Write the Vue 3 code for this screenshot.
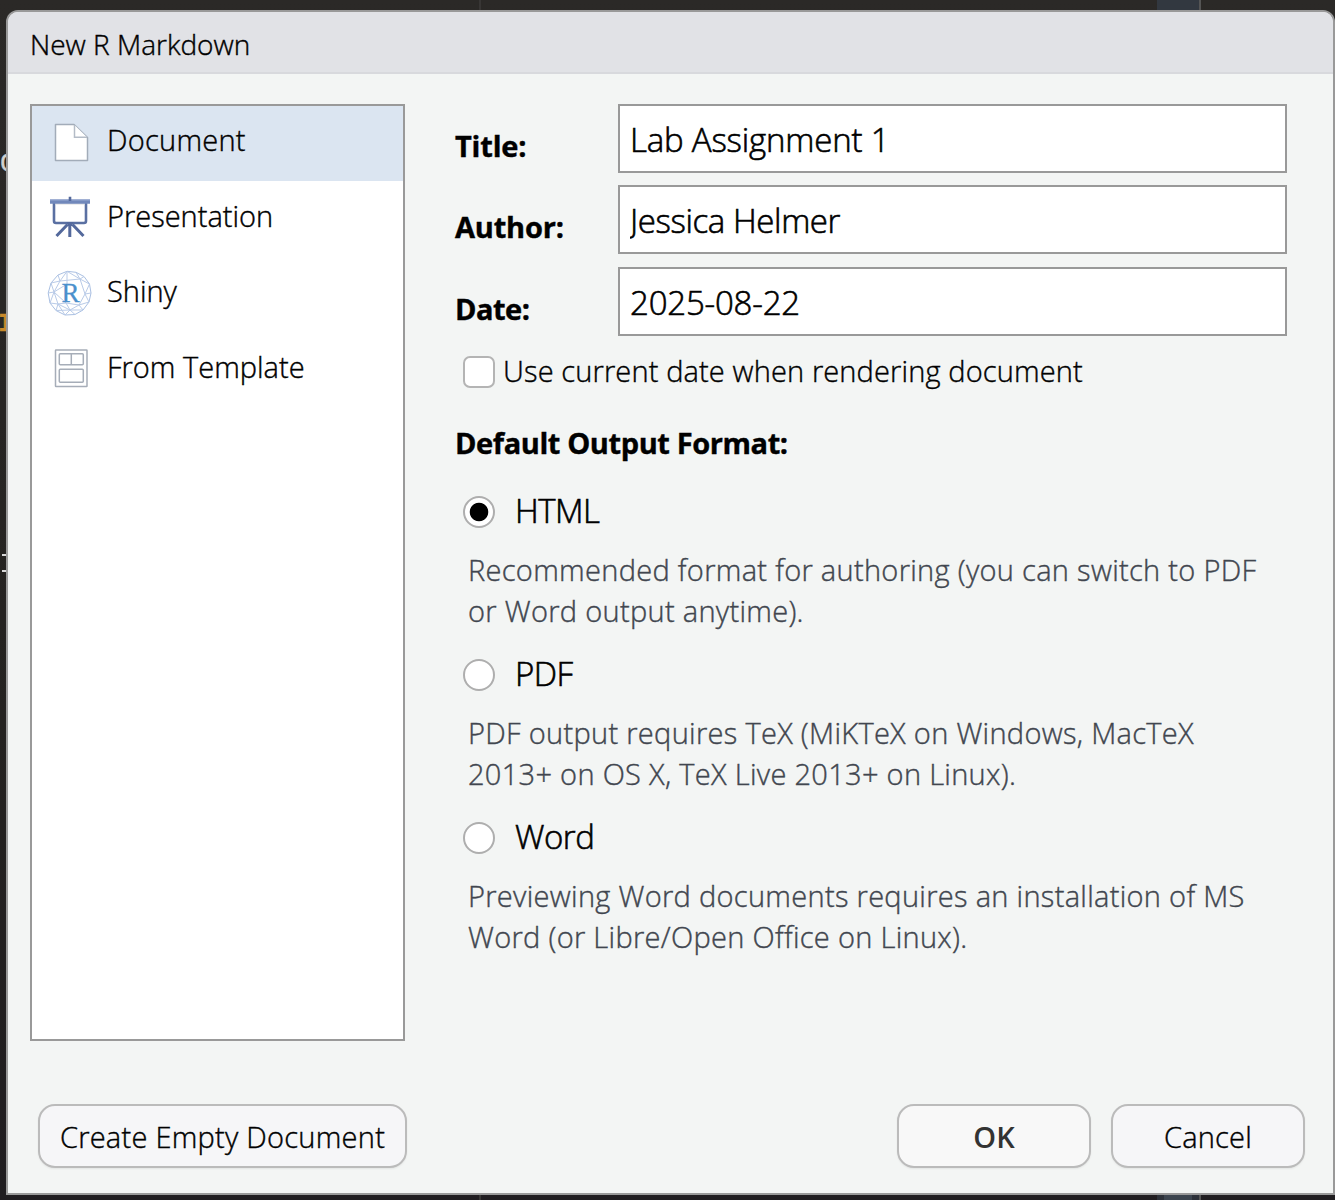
<script setup>
import { ref } from 'vue'

const templates = ['Document', 'Presentation', 'Shiny', 'From Template']
const active = ref('Document')
const fields = ref([
  { label: 'Title:', key: 'title', value: 'Lab Assignment 1' },
  { label: 'Author:', key: 'author', value: 'Jessica Helmer' },
  { label: 'Date:', key: 'date', value: '2025-08-22' },
])
const format = ref('HTML')
const formats = [
  { name: 'HTML', lines: ['Recommended format for authoring (you can switch to PDF', 'or Word output anytime).'] },
  { name: 'PDF', lines: ['PDF output requires TeX (MiKTeX on Windows, MacTeX', '2013+ on OS X, TeX Live 2013+ on Linux).'] },
  { name: 'Word', lines: ['Previewing Word documents requires an installation of MS', 'Word (or Libre/Open Office on Linux).'] },
]
</script>

<template>
  <div class="desktop">
    <i class="pane-line"></i>
    <i class="scroll top"></i>
    <i class="scroll bottom"></i>
    <div class="gutter">
      <span class="glyph c">C</span>
      <span class="glyph i">I</span>
      <i class="dash d1"></i>
      <i class="dash d2"></i>
    </div>
    <section class="dialog">
      <header class="caption"><span>New R Markdown</span></header>
      <div class="body">
        <ul class="list">
          <li v-for="t in templates" :key="t" :class="{ active: t === active }" @click="active = t">
            <svg v-if="t === 'Document'" class="icon" width="46" height="46" viewBox="0 0 46 46">
              <path d="M8.5 5.5H27L40.500 18.500V41.500H8.500Z" fill="#fff" stroke="#a2acb9" stroke-width="1.500" stroke-linejoin="round" />
              <path d="M27.500 6V18.200H40" fill="#fff" stroke="#b4bcc7" stroke-width="1.500" />
            </svg>
            <svg v-else-if="t === 'Presentation'" class="icon board" width="46" height="46" viewBox="0 0 46 46">
              <path d="M22.800 29V42M20.500 29.500L9.500 41M25.500 29.500L36.500 41" fill="none" stroke="#54699c" stroke-width="3" />
              <path d="M7 7V26Q7 28 9 28H37Q39 28 39 26V7" fill="#fff" stroke="#5a70a2" stroke-width="2.600" />
              <path d="M8 8.200H38V9.500H8Z" fill="#d9d9dc" />
              <path d="M3 4.500H43V8.800H3Z" fill="#7188bb" />
              <path d="M3 4.500H43V5.800H3Z" fill="#8da0cb" />
              <path d="M21.700 1.800H24.300V6H21.700Z" fill="#54699c" />
              <path d="M19.500 27H26.500L25 31H21Z" fill="#54699c" />
            </svg>
            <svg v-else-if="t === 'Shiny'" class="icon" width="46" height="46" viewBox="0 0 46 46">
              <g fill="none" stroke="#b9cbe8" stroke-width="1">
                <path d="M20 1.300L29 2.300L37 6.500L42.500 14L44 23L42 32L36 40L28 44.500L18 45L9 40.500L3 33L1.200 23L4 13L11 5Z" stroke="#a9bfe2" />
                <path d="M20 1.300L33 9L42.500 14L38 24L44 23M29 2.300L33 9L37 6.500M33 9L38 24L42 32L32 35L36 40L23 40L28 44.500M32 35L38 24M32 35L23 40L18 45L11 34L3 33L7 22L1.200 23M11 34L9 40.500L23 40L11 34L7 22L4 13L13 11L20 1.300M13 11L11 5M13 11L7 22L19 33M13 11L33 9M20 14L7 22M19 33L11 34M20 14L20 1.300M19 33L23 40M19 33L32 35" />
              </g>
              <text x="23.500" y="32" text-anchor="middle" class="shiny-r">R</text>
            </svg>
            <svg v-else class="icon" width="46" height="46" viewBox="0 0 46 46">
              <g fill="#fff" stroke="#a6adb8" stroke-width="1.500">
                <rect x="8.500" y="5" width="31.500" height="36.500" rx="0.500" />
                <rect x="12.300" y="8.800" width="24" height="11" rx="1" />
                <path d="M24.300 9V19.800" />
                <rect x="12.300" y="24.200" width="24" height="13" rx="1" />
              </g>
            </svg>
            <span>{{ t }}</span>
          </li>
        </ul>
        <form class="form" @submit.prevent>
          <label v-for="f in fields" :key="f.key" class="field" :class="f.key">
            <b>{{ f.label }}</b>
            <input v-model="f.value" type="text" spellcheck="false">
          </label>
          <label class="check"><i class="box"></i><span>Use current date when rendering document</span></label>
          <h2>Default Output Format:</h2>
          <div v-for="f in formats" :key="f.name" class="format">
            <label class="option" @click="format = f.name">
              <i class="radio" :class="{ on: format === f.name }"></i><span>{{ f.name }}</span>
            </label>
            <p><span v-for="l in f.lines" :key="l">{{ l }}</span></p>
          </div>
        </form>
      </div>
      <footer class="actions">
        <button class="empty" type="button"><span>Create Empty Document</span></button>
        <button class="ok" type="button"><span>OK</span></button>
        <button class="cancel" type="button"><span>Cancel</span></button>
      </footer>
    </section>
  </div>
</template>

<style>
body { margin: 0; }
</style>

<style scoped>
* { box-sizing: border-box; }
.desktop {
  position: relative;
  width: 1335px;
  height: 1200px;
  padding: 10px 0 5px 6px;
  overflow: hidden;
  background: linear-gradient(#2b2927, #242220 60%, #201d20);
  font-family: "Open Sans", "Noto Sans", sans-serif;
  font-size: 29px;
  font-weight: 300;
  color: #000;
  -webkit-text-stroke: 0.4px currentColor;
}
.pane-line { position: absolute; left: 479px; top: 0; width: 2px; height: 1200px; background: #383635; }
.scroll { position: absolute; left: 1157px; width: 44px; height: 10px; background: #323840; border-right: 2px solid #555; }
.scroll.top { top: 0; }
.scroll.bottom { bottom: 0; border-left: 7px solid #2c3038; box-shadow: inset -7px 0 #2c3038; background: #3c444e; }
.gutter { position: absolute; left: 0; top: 0; width: 6px; height: 1200px; overflow: hidden; font: 26px/30px "Liberation Mono", monospace; }
.glyph { position: absolute; left: 0; }
.glyph.c { top: 149px; color: #d0d0d0; }
.glyph.i { top: 309px; left: -2px; color: #c98a2b; font-weight: 700; }
.dash { position: absolute; left: 2px; width: 4px; height: 2px; background: #d8d8d8; }
.d1 { top: 554px; }
.d2 { top: 570px; }

.dialog {
  position: relative;
  width: 1329px;
  height: 1185px;
  border: 2px solid #999;
  border-radius: 12px 12px 0 0;
  background: #f3f5f4;
  overflow: hidden;
  display: flex;
  flex-direction: column;
}
.caption {
  height: 62px;
  flex: none;
  padding-left: 22px;
  background: #e1e2e6;
  border-bottom: 2px solid #d8d9dd;
  line-height: 65px;
  font-size: 28px;
}
span { white-space: pre; }
.body { display: flex; padding: 30px 0 0 22px; height: 967px; flex: none; }
.list {
  width: 375px;
  height: 937px;
  margin: 0;
  padding: 0;
  list-style: none;
  background: #fff;
  border: 2px solid #999;
}
.list li { display: flex; align-items: center; height: 75.6px; padding-left: 15px; }
.list li.active { height: 75px; background: #dbe5f1; }
.list li.active span { padding-bottom: 7px; letter-spacing: 0.25px; }
.icon { flex: none; margin: 0 14px 3px 0; overflow: visible; }
.icon.board { margin-bottom: 1px; }
.list span { line-height: 40px; padding-bottom: 6px; }
.shiny-r { font: 27px "Liberation Serif", serif; fill: #4a90cc; stroke: #4a90cc; stroke-width: 0.3px; -webkit-text-stroke: 0; }

.form { width: 832px; margin-left: 50px; }
.field { display: flex; height: 69px; margin-bottom: 12px; }
.author { margin-bottom: 13px; }
.field b { width: 163px; line-height: 84px; font-weight: 700; letter-spacing: -0.2px; }
.date b { letter-spacing: -0.5px; }
.field input {
  width: 669px;
  height: 69px;
  padding: 2px 10px 0;
  border: 2px solid #999;
  border-radius: 0;
  background: #fff;
  outline: none;
  font: inherit;
  font-size: 33px;
  letter-spacing: -0.2px;
  -webkit-text-stroke: 0.6px #000;
  color: #000;
}
.author input { letter-spacing: -0.4px; }
.date { margin-bottom: 20px; }
.check { display: flex; height: 32px; padding-left: 8px; }
.check span { margin-left: 8px; line-height: 30px; letter-spacing: 0.13px; }
.box { width: 32px; height: 32px; background: #fff; border: 2px solid #b4b4b4; border-radius: 7px; }
h2 { margin: 35px 0 32px; font-size: 29px; line-height: 40px; font-weight: 700; white-space: nowrap; letter-spacing: -0.4px; }
.option { display: flex; height: 32px; padding-left: 8px; line-height: 32px; font-size: 33px; letter-spacing: -0.5px; -webkit-text-stroke: 0.6px #000; }
.option span { margin-left: 20px; }
.radio { display: block; width: 32px; height: 32px; margin-top: 1px; border: 2px solid #aeaeae; border-radius: 50%; background: #fff; }
.radio.on { background: radial-gradient(circle, #000 8.800px, #fff 9.700px); }
.format p { margin: 22px 0 27px 13px; color: #41464f; line-height: 41px; letter-spacing: 0.3px; }
.format p span { display: block; }

.actions { display: flex; align-items: flex-start; padding: 63px 28px 0 30px; }
button {
  height: 64px;
  padding: 0;
  border: 2px solid #bbb;
  border-radius: 17px;
  background: #f6f6f8;
  box-shadow: 0 1px 2px #0001;
  font: inherit;
  color: #000;
}
.empty { width: 369px; margin-right: auto; letter-spacing: 0.25px; }
.ok { width: 194px; margin-right: 20px; background: #f8f8f8; color: #333; font-weight: 600; -webkit-text-stroke: 0; }
.cancel { width: 194px; letter-spacing: 0.2px; }
</style>
